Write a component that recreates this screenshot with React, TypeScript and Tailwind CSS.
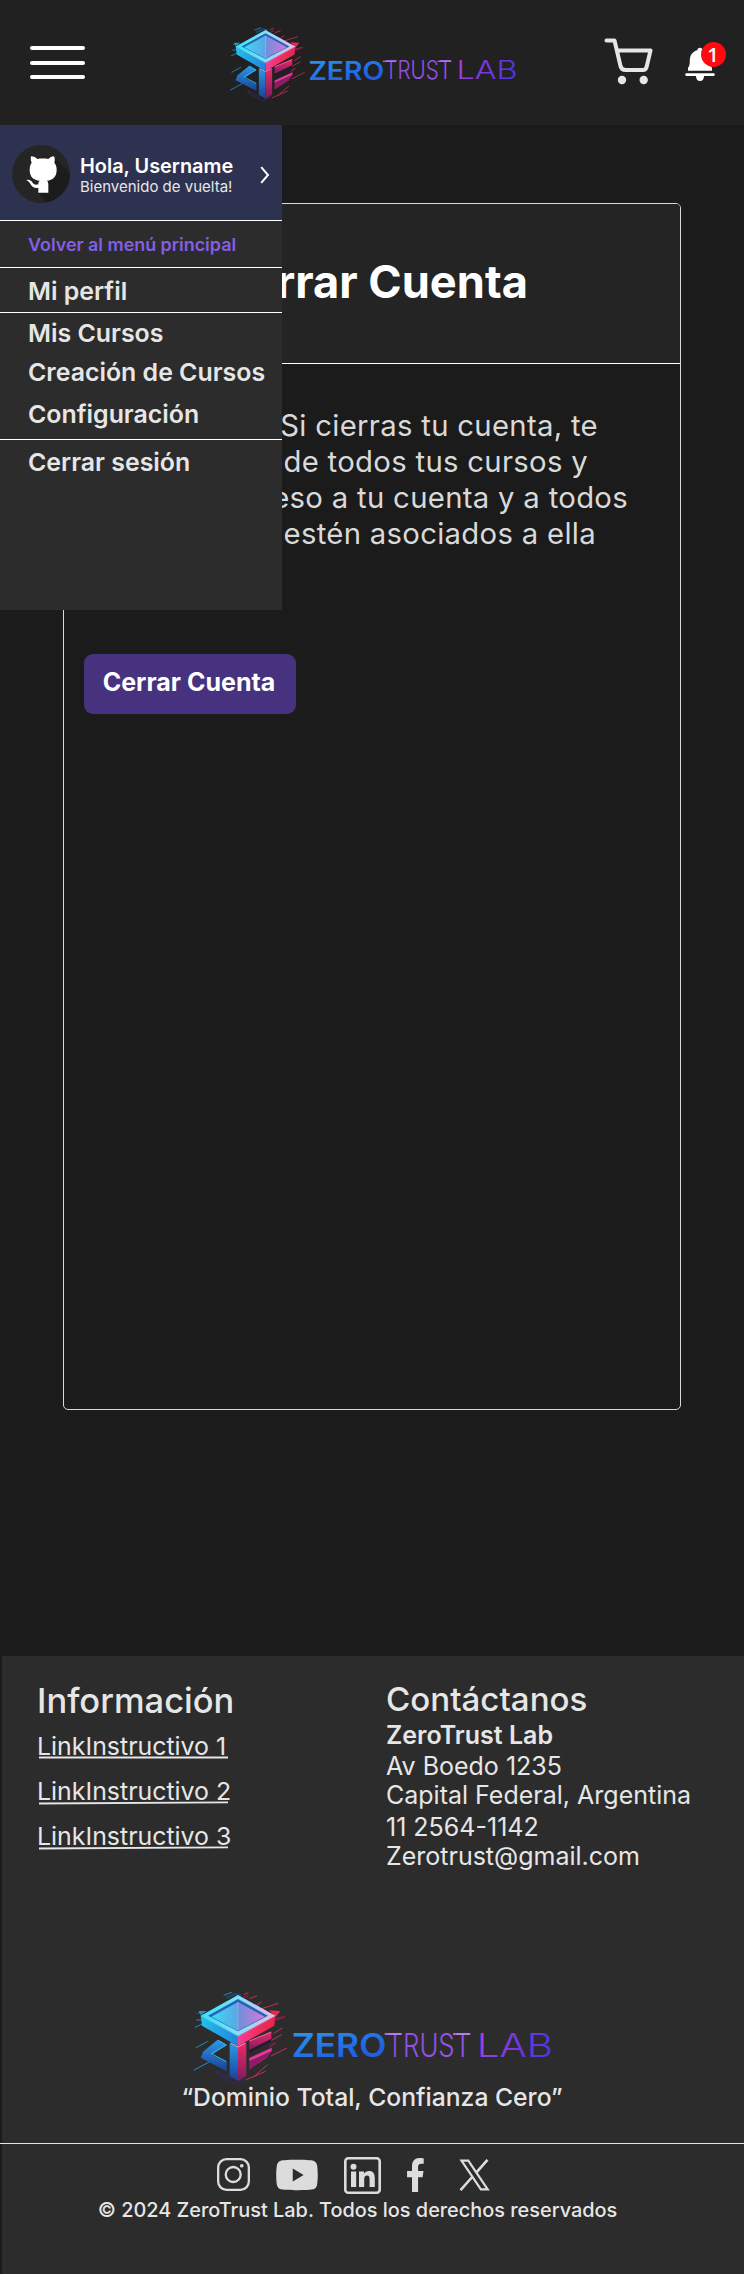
import React from "react";
import { FaFacebookF, FaYoutube } from "react-icons/fa";

function Logo({ className, id }: { className: string; id: string }) {
  const u = (n: string) => `url(#${id}-${n})`;
  return (
    <svg viewBox="70 60 1080 285" className={className}>
      <defs>
        <linearGradient id={`${id}-rim`} x1="0" x2="1">
          <stop offset="0" stopColor="#2fe6fa" />
          <stop offset=".5" stopColor="#7fe0fb" />
          <stop offset="1" stopColor="#f3b6e6" />
        </linearGradient>
        <linearGradient id={`${id}-in`} x1="0" x2="1">
          <stop offset="0" stopColor="#3fd9f2" />
          <stop offset=".5" stopColor="#5aa6e4" />
          <stop offset=".51" stopColor="#6d8fdc" />
          <stop offset="1" stopColor="#d67ad8" />
        </linearGradient>
        <linearGradient id={`${id}-left`} x1="0" x2="1">
          <stop offset="0" stopColor="#25bfee" />
          <stop offset="1" stopColor="#1f86dd" />
        </linearGradient>
        <linearGradient id={`${id}-right`} x1="0" x2="1">
          <stop offset="0" stopColor="#f0409a" />
          <stop offset=".5" stopColor="#f52d62" />
          <stop offset="1" stopColor="#e3264f" />
        </linearGradient>
        <linearGradient id={`${id}-blue`} x1="0" y1="0" x2="0" y2="1">
          <stop offset="0" stopColor="#2a9be8" />
          <stop offset="1" stopColor="#1b3f94" />
        </linearGradient>
        <linearGradient id={`${id}-red`} x1="0" y1="0" x2="0" y2="1">
          <stop offset="0" stopColor="#ee2a68" />
          <stop offset="1" stopColor="#7a1d5c" />
        </linearGradient>
        <linearGradient id={`${id}-zero`} x1="370" y1="190" x2="400" y2="300" gradientUnits="userSpaceOnUse">
          <stop offset="0" stopColor="#2b92ee" />
          <stop offset="1" stopColor="#1f5fe0" />
        </linearGradient>
        <linearGradient id={`${id}-trust`} x1="645" y1="0" x2="902" y2="0" gradientUnits="userSpaceOnUse">
          <stop offset="0" stopColor="#8d4fe0" />
          <stop offset="1" stopColor="#9a55e6" />
        </linearGradient>
        <linearGradient id={`${id}-lab`} x1="930" y1="190" x2="1143" y2="262" gradientUnits="userSpaceOnUse">
          <stop offset="0" stopColor="#a53fe0" />
          <stop offset=".6" stopColor="#6d36e0" />
          <stop offset="1" stopColor="#4a35ee" />
        </linearGradient>
      </defs>
      <g fill="none" strokeWidth="3">
        <path stroke="#1d8fc4" d="M162 76l26-10M84 130l18-6M76 172l22-10M88 126l12 6M78 234l36-20M72 301l48-26M80 150l14 0" />
        <path stroke="#164a72" strokeWidth="7" d="M170 84l26-12M196 72l18 4" />
        <path stroke="#c92c55" d="M222 74l14-6M240 86l22-9M262 104l14-8M276 116l50-16M312 190l26-16M300 214l36-20M304 258l48-24M250 322l44-38M228 330l60-26M306 150l36-10" />
        <path stroke="#7d1c46" strokeWidth="6" d="M224 82l12-5M318 150l28-10M300 230l18-12" />
        <path stroke="#39266f" d="M134 302l50 24M150 318l44 22M145 300v18M196 340l30-14" />
      </g>
      <path fill="#e8294e" d="M298 121l34 2-14 18z" />
      <path fill="#2199c9" d="M93 135l-6-12 24 0z" />
      <path fill={u("left")} d="M93 137L205 198V229L97 167Z" />
      <path fill={u("right")} d="M317 137L205 198V229L314 167Z" />
      <path fill={u("rim")} d="M205 75L317 137 205 198 93 137Z" />
      <path fill="#2563b8" d="M205 87L295 137 205 184 115 137Z" />
      <path fill={u("in")} d="M205 96L285 140 205 182 125 140Z" />
      <path stroke="#ffffff" strokeOpacity=".35" strokeWidth="2" fill="none" d="M205 97V180M93 138L205 199 317 138" />
      <path fill={u("blue")} d="M180 218L205 231V333L180 318Z" />
      <path fill={u("red")} d="M205 231L230 218V318L205 333Z" />
      <path stroke="#ff9bc4" strokeWidth="3" fill="none" d="M183 219L205 231 227 219" />
      <path fill={u("blue")} d="M144 209L171 225 126 255 171 275V304L93 263 100 245Z" />
      <path fill="none" stroke="#37b8f4" strokeWidth="3" d="M146 211L170 225 125 251 170 275" />
      <path fill={u("red")} d="M239 213L305 185V207L239 240Z" />
      <path fill="#2c1730" d="M239 240l66-33 0 8-66 34z" />
      <path fill="#e8369f" d="M239 264L306 233V244L239 274Z" />
      <path fill="#8c1d65" d="M239 274L306 244 292 264 239 299Z" />
      <path fill="none" stroke="#ff62a8" strokeWidth="3" d="M239 213L305 186" />
      <text x="366" y="261" fontFamily="Inter, sans-serif" fontSize="97" fontWeight="600" textLength="284" lengthAdjust="spacingAndGlyphs" fill={u("zero")}>ZERO</text>
      <text x="651" y="260" fontFamily="Inter, sans-serif" fontSize="96" fontWeight="300" textLength="253" lengthAdjust="spacingAndGlyphs" fill={u("trust")}>TRUST</text>
      <text x="921" y="260" fontFamily="Inter, sans-serif" fontSize="96" fontWeight="300" textLength="229" lengthAdjust="spacingAndGlyphs" fill={u("lab")}>LAB</text>
      <path stroke="#c08af0" strokeWidth="4" d="M645 192H695M850 192H902" />
    </svg>
  );
}

function Header() {
  return (
    <header className="flex h-[125px] bg-[#212121]">
      <button aria-label="Menú" className="ml-[30px] mt-[46px] flex h-[33px] w-14 flex-col justify-between">
        <span className="h-1 w-[55px] rounded-full bg-white" />
        <span className="h-1 w-[55px] rounded-full bg-white" />
        <span className="h-1 w-[55px] rounded-full bg-white" />
      </button>
      <Logo id="top" className="ml-[143px] mt-[26px] h-[76px] w-[289px]" />
      <svg viewBox="0 0 50 50" className="ml-[86px] mt-[37px] size-[50px]" fill="none" stroke="#e6e6e6" strokeWidth="4" strokeLinecap="round" strokeLinejoin="round">
        <path d="M2.500 3.500h8l6 25.500q1 4 5 4h17.500q3 0 3.700-3.500L46.500 13.500H13" />
        <circle cx="18" cy="43" r="4.200" fill="#e6e6e6" stroke="none" />
        <circle cx="39.700" cy="43" r="4.200" fill="#e6e6e6" stroke="none" />
      </svg>
      <div className="relative ml-[31px] mt-[47px] h-[35px] w-[30px]">
        <svg viewBox="0 0 30 35" className="h-[35px] w-[30px]" fill="#fff">
          <path d="M15 .8c1.500 0 2.700 1 2.700 2.500 5 1.300 7.500 5.200 7.500 10.200 0 4 .4 5.500 1.800 7.500v2.800H3V21c1.400-2 1.800-3.500 1.800-7.500 0-5 2.500-8.900 7.500-10.200C12.300 1.800 13.500.8 15 .8zM1.500 26.300h27a1.300 1.300 0 0 1 0 2.600h-9.500c0 3-1.500 5.200-4 5.200s-4-2.200-4-5.200H1.500a1.300 1.300 0 0 1 0-2.600z" />
        </svg>
        <span className="absolute -top-[5px] left-4 flex size-[25px] items-center justify-center rounded-full bg-[#fe0a0f] pr-px font-['Open_Sans'] text-[20px] font-semibold leading-none text-white">
          1
        </span>
      </div>
    </header>
  );
}

function Avatar() {
  return (
    <svg viewBox="0 0 174 174" className="ml-3 mt-5 size-[58px] shrink-0">
      <defs>
        <clipPath id="avatar-clip"><circle cx="87" cy="87" r="87" /></clipPath>
      </defs>
      <circle cx="87" cy="87" r="87" fill="#252525" />
      <path clipPath="url(#avatar-clip)" fill="#1c1c1c" d="M126 36L190 100V190H120L78 142 108 110Z" />
      <path fill="#fff" d="M57 34c8 0 15 4 19 8 10-2 23-2 33 0 4-4 11-8 17-8 3 6 3 13 1 19 5 6 7 13 7 21 0 22-12 31-29 33 3 3 4 7 4 12v24H79v-15c-15 3-20-4-25-13-3-5-6-7-11-10 9-3 15 2 19 8 4 6 9 7 17 5 0-5 1-8 4-11-17-2-30-10-30-33 0-8 2-15 6-21-3-6-3-13-2-19z" />
    </svg>
  );
}

function SideMenu() {
  const item = "pl-7 text-[24.9px] font-semibold whitespace-nowrap text-[#e6e6e6]";
  return (
    <aside className="absolute left-0 top-[125px] h-[485px] w-[282px] bg-[#2c2c2c]">
      <div className="flex h-24 border-b border-white bg-[#2d3250]">
        <Avatar />
        <div className="ml-[10px] mt-[29px] w-[172px] whitespace-nowrap">
          <p className="text-[19.9px] font-semibold leading-[24px] text-white">Hola, Username</p>
          <p className="text-[15px] leading-[18px] text-[#e6e6e6]">Bienvenido de vuelta!</p>
        </div>
        <svg viewBox="0 0 10 18" className="ml-[8px] mt-[41px] h-[18px] w-[10px]" fill="none" stroke="#fff" strokeWidth="2">
          <path d="M1.200 1.200L8 9 1.200 16.800" />
        </svg>
      </div>
      <p className="h-[47px] border-b border-white pl-7 text-[17.9px] font-semibold leading-[47px] text-[#835fe6]">Volver al menú principal</p>
      <p className={`${item} h-[45px] border-b border-white leading-[46px]`}>Mi perfil</p>
      <p className={`${item} h-10 leading-[40px]`}>Mis Cursos</p>
      <p className={`${item} h-10 leading-[39px]`}>Creación de Cursos</p>
      <p className={`${item} h-[47px] border-b border-white leading-[43px]`}>Configuración</p>
      <p className={`${item} leading-[45px]`}>Cerrar sesión</p>
    </aside>
  );
}

function AccountCard() {
  return (
    <section className="ml-[63px] mt-[78px] h-[1207px] w-[618px] overflow-hidden rounded-[5px] border border-[#d9d9d9]">
      <div className="h-[160px] border-b border-white bg-[#242424] pt-[54px] text-center text-[45.2px] font-bold leading-[48px] text-white">
        <h1>Cerrar Cuenta</h1>
      </div>
      <div className="w-[564px] whitespace-nowrap pt-[44px] text-right text-[29.3px] leading-[36px] tracking-[0.3px] text-[#d9d9d9]">
        <p className="pr-[30px]">Advertencia: Si cierras tu cuenta, te</p>
        <p className="pr-[40px]">darás de baja de todos tus cursos y</p>
        <p>perderás acceso a tu cuenta y a todos</p>
        <p className="pr-[32px]">los datos que estén asociados a ella</p>
      </div>
      <button className="ml-5 mt-[102px] block h-[60px] w-[212px] rounded-[9px] bg-[#46327e] pb-[2px] pr-[2px] text-center text-[25px] font-bold text-white">
        Cerrar Cuenta
      </button>
    </section>
  );
}

function Footer() {
  const link = "block h-[45px] text-[24.9px] leading-[46px]";
  return (
    <footer className="mt-[246px] h-[618px] text-[#e6e6e6]">
      <div className="ml-[2px] flex h-[334px] bg-[#2c2c2c]">
        <div className="w-[350px] whitespace-nowrap pl-[35px] pt-[23px]">
          <h2 className="h-11 text-[34.5px] leading-[43px] font-medium">Información</h2>
          <nav>
            {[1, 2, 3].map((n) => (
              <a key={n} href="#" className={link}>
                LinkInstructivo {n}
                <svg viewBox="0 0 191 4" className="-mt-[13px] h-1 w-[191px]" stroke="#e6e6e6" strokeWidth="1.800">
                  <path d={n === 1 ? "M2 1.500H191" : "M2 2.500L191 1.300"} />
                </svg>
              </a>
            ))}
          </nav>
        </div>
        <address className="whitespace-nowrap pl-[34px] pt-[22px] text-[25px] not-italic leading-[30px]">
          <h2 className="h-[42px] text-[33.1px] font-medium leading-[42px]">Contáctanos</h2>
          <p className="font-semibold">ZeroTrust Lab</p>
          <p className="pt-px">Av Boedo 1235</p>
          <p className="-mt-px">Capital Federal, Argentina</p>
          <p className="pt-[2px]">11 2564-1142</p>
          <p className="-mt-px">Zerotrust@gmail.com</p>
        </address>
      </div>
      <div className="ml-[2px] h-[153px] bg-[#2c2c2c]">
        <Logo id="bottom" className="ml-[191px] h-[95px] w-[360px]" />
        <p className="ml-[-2px] text-center text-[24.7px] font-medium leading-[25px]">“Dominio Total, Confianza Cero”</p>
      </div>
      <div className="h-px bg-[#e6e6e6]" />
      <div className="ml-[2px] h-[130px] bg-[#2c2c2c]">
        <div className="flex h-[52px] pl-[215px] pt-[13px] text-[#dcdcdc]">
          <svg viewBox="0 0 34 34" className="mt-px size-[33px]" fill="none" stroke="currentColor" strokeWidth="2.400">
            <rect x="1.200" y="1.200" width="31.600" height="31.600" rx="8.500" />
            <circle cx="16.700" cy="17" r="7.700" />
            <circle cx="25.500" cy="8" r="1.900" fill="currentColor" stroke="none" />
          </svg>
          <FaYoutube className="ml-[26px] mt-[-3px] h-[42px] w-[42px]" preserveAspectRatio="none" viewBox="12 -10 552 532" />
          <svg viewBox="0 0 37 37" className="ml-[26px] size-[37px]">
            <rect x="1.300" y="1.300" width="34.400" height="34.400" rx="3" fill="none" stroke="currentColor" strokeWidth="2.600" />
            <circle cx="9.500" cy="9.700" r="3" fill="currentColor" />
            <path fill="currentColor" d="M7 14.500h5.200V30H7zM15 14.500h5v2.100c1.100-1.700 2.900-2.600 5-2.600 4.200 0 5.800 2.700 5.800 7.300V30h-5.200v-7.800c0-2.300-.6-3.800-2.500-3.800-2 0-2.900 1.400-2.900 3.800V30H15z" />
          </svg>
          <FaFacebookF className="ml-[26px] mt-[1px] h-[34px] w-[17px]" viewBox="22 0 280 512" preserveAspectRatio="none" />
          <svg viewBox="0 0 31 32" className="ml-[35px] mt-[2px] h-8 w-[31px]" fill="none" stroke="currentColor">
            <path strokeWidth="2.200" d="M2.500 1.700H9.300L28.700 30.300H21.900Z" />
            <path strokeWidth="2.600" d="M28.500 .8L17.500 13.300M13.200 18L1.500 31.200" />
          </svg>
        </div>
        <p className="w-[711px] text-center text-[19.9px] font-medium leading-[28px]">© 2024 ZeroTrust Lab. Todos los derechos reservados</p>
      </div>
    </footer>
  );
}

export default function App() {
  return (
    <div className="relative flow-root h-[2274px] w-[744px] overflow-hidden bg-[#1b1b1b] font-['Inter',sans-serif]">
      <Header />
      <AccountCard />
      <SideMenu />
      <Footer />
    </div>
  );
}
